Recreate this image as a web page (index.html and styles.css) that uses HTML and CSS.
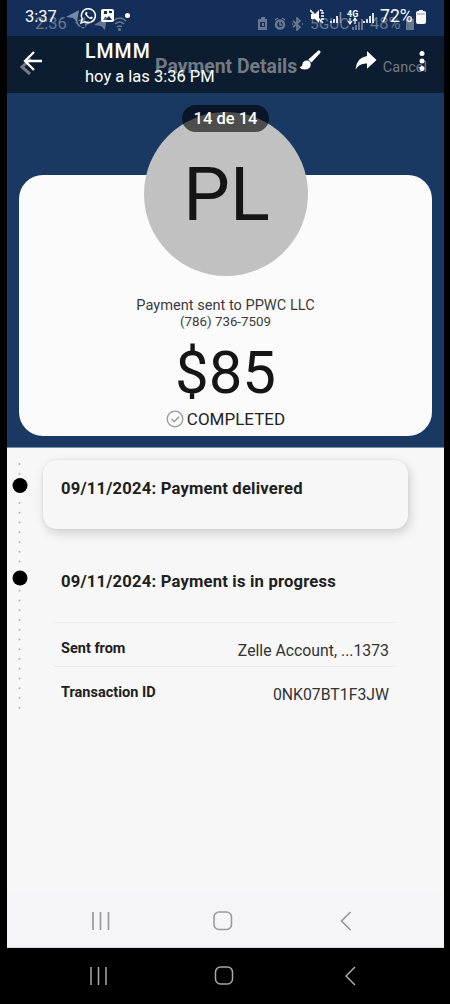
FILE: index.html
```html
<!DOCTYPE html>
<html lang="es">
<head>
<meta charset="utf-8">
<title>Payment Details</title>
<link rel="stylesheet" href="styles.css">
</head>
<body>
<main class="screen">
  <section class="photo">
    <div class="photo-status">
      <span class="photo-clock">2:36</span>
      <svg class="photo-apps" width="52" height="16" viewBox="0 0 52 16"><path d="M0 6 10 1v10H4z M3 7l5 6 6-6v-2H3z M19 9 32 1l-2 13-4-4z" fill="currentColor"/><path d="M38 5q7-6 13 0M40 8q5-4 9 0M42 11q3-2 5 0" fill="none" stroke="currentColor" stroke-width="1.4"/><circle cx="44.500" cy="13.500" r="1.500" fill="currentColor"/></svg>
      <svg class="photo-icons" width="46" height="14" viewBox="0 0 46 14"><path fill="currentColor" fill-rule="evenodd" d="M0 2h3V0h4v2h2v11H0zM2 5v5h5V5zM4 6h2v3H4z"/><path d="m17 3 3-2M24 1l3 2" stroke="currentColor" stroke-width="1.500"/><circle cx="22" cy="7.500" r="4" fill="none" stroke="currentColor" stroke-width="2.500"/><path d="M22 5v3h2M35 4l7 6-3 3V1l3 3-7 6M34 7h1M44 7h1" fill="none" stroke="currentColor" stroke-width="1.700"/></svg>
      <span class="photo-network">5GUC</span>
      <svg class="photo-signal" width="12" height="12" viewBox="0 0 12 12"><path d="M1 12V9M4 12V7M7 12V4M10 12V1" stroke="currentColor" stroke-width="2"/></svg>
      <span class="photo-charge">48%</span>
      <svg width="8" height="12" viewBox="0 0 8 12"><path d="M0 1h2V0h4v1h2v11H0z" fill="currentColor"/></svg>
    </div>
    <header class="photo-header">
      <svg class="photo-back" width="12" height="18" viewBox="0 0 12 18"><path d="M11 1 2 9l8 7" fill="none" stroke="currentColor" stroke-width="3"/></svg>
      <h1 class="photo-title">Payment Details</h1>
      <span class="photo-cancel">Cancel</span>
    </header>
    <div class="hero">
      <div class="card">
        <div class="avatar">PL</div>
        <p class="recipient">Payment sent to PPWC LLC</p>
        <p class="phone">(786) 736-7509</p>
        <p class="amount">$85</p>
        <p class="state"><svg width="18" height="18" viewBox="0 0 18 18"><circle cx="9" cy="9" r="7.800" fill="none" stroke="#999" stroke-width="1.300"/><path d="m5.500 9 2.700 2.700 4.800-5" fill="none" stroke="#999" stroke-width="1.500"/></svg><span>COMPLETED</span></p>
      </div>
    </div>
    <div class="history">
      <svg class="rail" width="16" height="252" viewBox="0 0 16 252"><path d="M7.500 3v249" stroke="#b4b4b4" stroke-width="2" stroke-linecap="round" stroke-dasharray="0 9.750"/><circle cx="8" cy="25" r="11" fill="#f7f7f7"/><circle cx="8" cy="117.500" r="9" fill="#f7f7f7"/><circle cx="8" cy="24.500" r="7.500"/><circle cx="8" cy="117" r="7.500"/></svg>
      <div class="events">
        <div class="event delivered">09/11/2024: Payment delivered</div>
        <div class="event progress">09/11/2024: Payment is in progress</div>
        <dl class="details">
          <div class="detail"><dt>Sent from</dt><dd class="account">Zelle Account, ...1373</dd></div>
          <div class="detail"><dt>Transaction ID</dt><dd class="transaction">0NK07BT1F3JW</dd></div>
        </dl>
      </div>
    </div>
    <nav class="photo-nav">
      <svg width="264" height="22" viewBox="0 0 264 22"><path d="M3 2v18M10.500 2v18M18.500 2v18M260.500 2l-9 9 9 9" fill="none" stroke="#999" stroke-width="1.700"/><rect x="124" y="2" width="17.500" height="17.500" rx="5" fill="none" stroke="#999" stroke-width="1.600"/></svg>
    </nav>
  </section>
  <nav class="phone-nav">
    <svg width="270" height="22" viewBox="0 0 270 22"><path d="M3 2v18M10.500 2v18M18 2v18M267 2l-9 9 9 9" fill="none" stroke="#aaa" stroke-width="1.500"/><rect x="127.500" y="2" width="17" height="17" rx="5" fill="none" stroke="#aaa" stroke-width="1.500"/></svg>
  </nav>
  <div class="viewer">
    <div class="viewer-status">
      <span class="clock">3:37</span>
      <svg class="apps" width="66" height="18" viewBox="0 0 66 18"><path d="m1 10 13-7-2 12-4-4z" fill="#7188a7"/><path d="m16 16 1.200-4a7 7 0 1 1 2.800 2.800z" fill="none" stroke="#fff" stroke-width="1.500"/><path d="M20.500 5.500q1-1.500 2 .5l-.5 1.500q1 2 3 3l1.200-1q2.600.8 1 2-2 1.500-5-1.500t-1.700-4.500z" fill="#fff"/><path fill="#fff" fill-rule="evenodd" d="M38 2h9a2 2 0 0 1 2 2v9a2 2 0 0 1-2 2h-9a2 2 0 0 1-2-2V4a2 2 0 0 1 2-2zm0 11h9l-3-4-2 2-1.500-1.500zM39 4v3h3V4zM44 4v2h3V4z"/><circle cx="62.500" cy="8.500" r="2.500" fill="#fff"/></svg>
      <svg class="radio" width="67" height="18" viewBox="0 0 67 18"><path d="M1 6h4l4-4v13l-4-4H1z" fill="#fff"/><path d="m0 2 13 13M11 5h3M11 8h3M11 11h3M10 2l3 1" stroke="#fff" stroke-width="1.600"/><path d="M21 15v-2M24 15v-4M27 15V8M54 15v-2M57 15v-4M60 15V8M63 15V5" stroke="#fff" stroke-width="1.700"/><path d="M30.500 15V4" stroke="#8295b1" stroke-width="1.500"/><text x="37" y="8.500" class="lte">4G</text><path d="M40 10v5m-2-2 2 3 2-3M45 16v-5m-2 2 2-3 2 3" fill="none" stroke="#fff" stroke-width="1.200"/></svg>
      <span class="charge">72%</span>
      <svg class="battery" width="10" height="14" viewBox="0 0 10 14"><path d="M3 0h4v1h1a2 2 0 0 1 2 2v9a2 2 0 0 1-2 2H2a2 2 0 0 1-2-2V3a2 2 0 0 1 2-2h1z" fill="#f8f8f8"/><path d="M1 4h8" stroke="#8a98af"/></svg>
    </div>
    <div class="viewer-bar">
      <svg class="back" width="20" height="20" viewBox="0 0 20 20"><path d="M19 10H2m9-9-9 9 9 9" fill="none" stroke="#fff" stroke-width="2.300"/></svg>
      <div class="sender"><strong>LMMM</strong><span>hoy a las 3:36 PM</span></div>
      <svg class="brush" width="22" height="20" viewBox="0 0 22 20"><path d="M19 .7q1-.8 2 .2t.2 2L12.500 12.500 9.300 9.400zM8 10.500q3.500 0 3.800 4-.5 5-6.300 5Q2 19.500.5 17q2.800-.2 3-3 .5-3.500 4.500-3.500z" fill="#fff"/></svg>
      <svg class="share" width="22" height="20" viewBox="0 0 22 20"><path d="M12 0 21.500 9 12 17.800v-5.300Q4.500 12 .5 18.500 1.500 6.500 12 5z" fill="#fff"/></svg>
      <svg class="more" width="6" height="20" viewBox="0 0 6 20"><circle cx="3" cy="2.500" r="2.500" fill="#fff"/><circle cx="3" cy="10" r="2.500" fill="#fff"/><circle cx="3" cy="17.500" r="2.500" fill="#fff"/></svg>
    </div>
    <div class="counter">14 de 14</div>
  </div>
</main>
</body>
</html>
```
FILE: styles.css
```css
* { box-sizing: border-box; }
body, h1, p, dl, dd { margin: 0; }
body { background: #000; font-family: Roboto, "Liberation Sans", sans-serif; color: #222; }
svg { display: block; flex: none; }
.screen { position: relative; width: 450px; height: 1004px; overflow: hidden; white-space: nowrap; }
.photo { display: flex; flex-direction: column; width: 437px; height: 948px; margin-left: 7px; background: #f7f7f7; }

.photo-status { display: flex; align-items: center; height: 36px; padding: 11px 0 0 28px; background: #132f59; color: #69788d; }
.photo-clock { width: 38px; font-size: 16.500px; }
.photo-apps { margin-left: 2px; }
.photo-icons { margin-left: 131px; }
.photo-network { width: 39px; margin-left: 6px; font-size: 15.500px; }
.photo-signal { margin-left: 3px; }
.photo-charge { width: 33px; margin: 0 3px 0 6px; font-size: 16.500px; }

.photo-header { display: flex; align-items: center; height: 57px; padding: 4px 17px 0 13px; background: #0d1d31; color: #737a83; }
.photo-title { margin: 0 0 0 123px; font-size: 19.400px; font-weight: 700; }
.photo-cancel { margin: 1px 0 0 auto; font-size: 14.500px; }

.hero { height: 355px; padding: 82px 12px 13px; background: #193963; border-bottom: 1px solid #7890a9; }
.card { display: flex; flex-direction: column; align-items: center; height: 261px; border-radius: 24px; background: #fbfbfb; }
.avatar { display: flex; flex: none; align-items: center; justify-content: center; width: 164px; height: 164px; margin-top: -63px; padding-left: 2px; border-radius: 50%; background: #c1c1c1; color: #151515; font-size: 74px; }
.recipient { margin-top: 21px; font-size: 14.600px; line-height: 17px; color: #3b3b3b; }
.phone { font-size: 13.300px; line-height: 16px; color: #3b3b3b; }
.amount { margin-top: 10px; font-size: 60px; line-height: 66px; color: #151515; }
.state { display: flex; align-items: center; gap: 3px; margin-top: 3px; font-size: 17px; line-height: 20px; }

.history { display: flex; flex: 1; padding-left: 5px; }
.rail { margin: 13px 0 0; }
.events { width: 365px; margin: 12px 0 0 15px; font-size: 16.600px; font-weight: 700; letter-spacing: .2px; color: #202020; }
.event { padding-left: 18px; }
.delivered { height: 69px; padding-top: 19px; border-radius: 14px; background: #f7f7f7; box-shadow: 2px 4px 11px #0000002b, 0 0 3px #00000010; line-height: 20px; }
.progress { height: 93px; padding-top: 43px; line-height: 20px; }
.details { width: 342px; margin-left: 11px; letter-spacing: 0; }
.detail { display: flex; justify-content: space-between; height: 44px; padding: 16px 7px 0; border-top: 1px solid #ececec; }
dt { font-size: 14.500px; line-height: 20px; }
dd { padding-top: 2px; font-size: 15.800px; line-height: 20px; font-weight: 400; color: #333; }
.photo-nav { height: 56px; padding: 18px 0 0 83px; background: #f5f5f7; border-bottom: 1px solid #ddd; }
.phone-nav { padding: 17px 0 0 88px; }

.viewer { position: absolute; top: 0; left: 0; width: 450px; color: #fff; }
.viewer-status { display: flex; align-items: center; height: 36px; padding-left: 25px; }
.clock { width: 32px; margin-top: -4px; font-size: 16.500px; }
.apps { margin: -4px 0 0 8px; }
.radio { margin: -2px 0 0 179px; }
.lte { fill: #fff; font-size: 9px; font-weight: 700; }
.charge { width: 34px; margin: -4px 0 0 3px; font-size: 17.600px; }
.battery { margin: -3px 0 0 2px; }
.viewer-bar { display: flex; align-items: center; height: 57px; padding-left: 23px; }
.back { margin-top: -7px; }
.sender { display: flex; flex-direction: column; width: 131px; margin: -1px 0 0 42px; font-size: 16.500px; line-height: 25px; }
.sender strong { font-size: 19.500px; font-weight: 500; letter-spacing: 1px; }
.brush { margin: -9px 0 0 83px; }
.share { margin: -7px 0 0 34px; }
.more { margin: -7px 0 0 42px; }
.counter { width: 87px; height: 27px; margin: 12px 0 0 182px; border-radius: 14px; background: #0009; font-size: 16.500px; font-weight: 500; line-height: 27px; text-align: center; }
```
